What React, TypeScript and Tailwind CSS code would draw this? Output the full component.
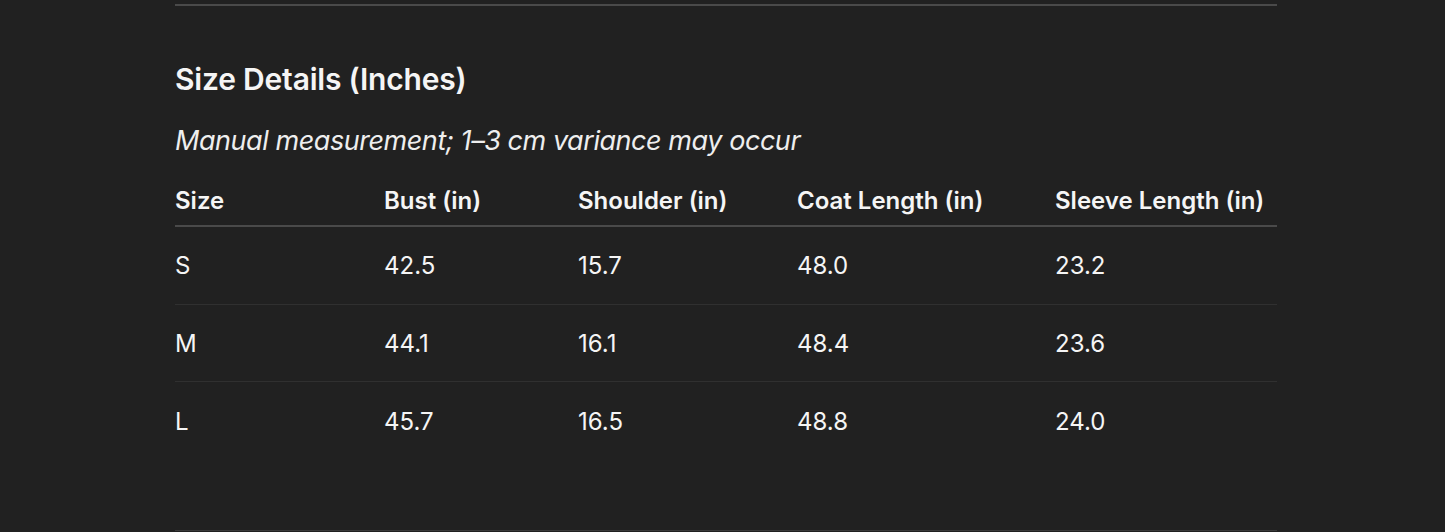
const rows = [
  { size: "S", bust: "42.5", shoulder: "15.7", coat: "48.0", sleeve: "23.2" },
  { size: "M", bust: "44.1", shoulder: "16.1", coat: "48.4", sleeve: "23.6" },
  { size: "L", bust: "45.7", shoulder: "16.5", coat: "48.8", sleeve: "24.0" },
];

const cols = "grid grid-cols-[209px_194px_219px_258px_222px]";

export default function App() {
  return (
    <div
      className="min-h-[532px] bg-[#212121] text-[#f5f5f5] pt-1"
      style={{ fontFamily: "Inter, 'Noto Sans', sans-serif" }}
    >
      <div className="ml-[175px] w-[1102px] border-t-2 border-[#4a4a4a]">
        <h2 className="pt-[55px] text-[30px] font-semibold leading-[36px] tracking-[-0.2px]">
          Size Details (Inches)
        </h2>
        <p className="mt-[26px] text-[27px] italic leading-[36px] tracking-[-0.45px] text-[#eeeeee]">
          Manual measurement; 1–3 cm variance may occur
        </p>

        <div className={`${cols} mt-[17px] h-[51px] items-center border-b-2 border-[#4a4a4a] text-[24px] font-semibold`}>
          <div>Size</div>
          <div>Bust (in)</div>
          <div>Shoulder (in)</div>
          <div>Coat Length (in)</div>
          <div>Sleeve Length (in)</div>
        </div>

        {rows.map((r, i) => (
          <div
            key={r.size}
            className={`${cols} h-[77.5px] items-center pt-[2px] text-[24px] ${i < rows.length - 1 ? "border-b border-[#303030]" : ""}`}
          >
            <div>{r.size}</div>
            <div>{r.bust}</div>
            <div>{r.shoulder}</div>
            <div>{r.coat}</div>
            <div>{r.sleeve}</div>
          </div>
        ))}

        <div className="mt-[70px] border-t border-[#3a3a3a]" />
      </div>
    </div>
  );
}
